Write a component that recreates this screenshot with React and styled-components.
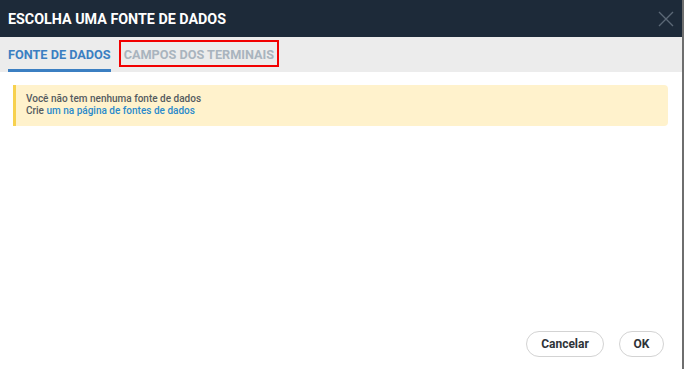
import React from "react";
import styled, { createGlobalStyle } from "styled-components";

const GlobalStyle = createGlobalStyle`
  html, body {
    margin: 0;
    padding: 0;
    background: #ffffff;
  }
  body {
    font-family: Roboto, "Liberation Sans", Arial, sans-serif;
  }
`;

const Frame = styled.div`
  display: flex;
  width: 684px;
  height: 369px;
`;

const Dialog = styled.div`
  flex: 1;
  display: flex;
  flex-direction: column;
  background: #ffffff;
`;

const Edge = styled.div`
  width: 2px;
  background: #6e6e6e;
`;

const Header = styled.div`
  height: 37px;
  background: #1d2a39;
  display: flex;
  align-items: center;
  justify-content: space-between;
  padding: 0 8px 0 8px;
  box-sizing: border-box;
`;

const Title = styled.h1`
  margin: 0;
  font-size: 14.3px;
  font-weight: 700;
  color: #ffffff;
`;

const Close = styled.button`
  border: 0;
  background: none;
  padding: 0;
  display: flex;
  cursor: pointer;
`;

const TabBar = styled.div`
  height: 35px;
  background: #ececec;
  display: flex;
  align-items: stretch;
  padding-left: 8px;
  gap: 8px;
`;

const Tab = styled.div`
  position: relative;
  display: flex;
  align-items: center;
  font-size: 12.7px;
  font-weight: 700;
  color: ${(p) => (p.$active ? "#3b7fc2" : "#a9b4be")};
  border-bottom: 3px solid ${(p) => (p.$active ? "#3b7fc2" : "transparent")};
  box-sizing: border-box;
  padding: 2px 0 0;
  ${(p) =>
    p.$marked &&
    `
    padding: 2px 5px 0;
    &::after {
      content: "";
      position: absolute;
      left: 0;
      right: 0;
      top: 3px;
      bottom: 2px;
      border: 2px solid #f20000;
    }
  `}
`;

const Body = styled.div`
  flex: 1;
  display: flex;
  flex-direction: column;
  padding: 13px 14px 0 13px;
`;

const Alert = styled.div`
  background: #fff2cc;
  border-left: 3px solid #f7d14e;
  border-radius: 0 4px 4px 0;
  padding: 8px 10px 9px 10px;
  font-size: 10px;
  line-height: 12px;
  color: #555b60;
  font-weight: 500;
`;

const Link = styled.a`
  color: #2b8acb;
  text-decoration: none;
`;

const Footer = styled.div`
  display: flex;
  justify-content: flex-end;
  gap: 15px;
  padding: 0 18px 12px 0;
`;

const Button = styled.button`
  height: 26px;
  min-width: ${(p) => p.$w}px;
  border: 1px solid #d3d3d3;
  border-radius: 13px;
  background: #ffffff;
  font-family: Roboto, "Liberation Sans", Arial, sans-serif;
  font-size: 12px;
  font-weight: 700;
  color: #2e3338;
  padding: 0 12px;
  cursor: pointer;
`;

const App = () => {
  return (
    <>
      <GlobalStyle />
      <Frame>
        <Dialog>
          <Header>
            <Title>ESCOLHA UMA FONTE DE DADOS</Title>
            <Close aria-label="Fechar">
              <svg width="16" height="16" viewBox="0 0 16 16">
                <path
                  d="M1 1 L15 15 M15 1 L1 15"
                  stroke="#5b6876"
                  strokeWidth="1.4"
                  fill="none"
                />
              </svg>
            </Close>
          </Header>
          <TabBar>
            <Tab $active>FONTE DE DADOS</Tab>
            <Tab $marked>CAMPOS DOS TERMINAIS</Tab>
          </TabBar>
          <Body>
            <Alert>
              <div>Você não tem nenhuma fonte de dados</div>
              <div>
                Crie <Link href="#">um na página de fontes de dados</Link>
              </div>
            </Alert>
          </Body>
          <Footer>
            <Button $w={78}>Cancelar</Button>
            <Button $w={45}>OK</Button>
          </Footer>
        </Dialog>
        <Edge />
      </Frame>
    </>
  );
};

export default App;
